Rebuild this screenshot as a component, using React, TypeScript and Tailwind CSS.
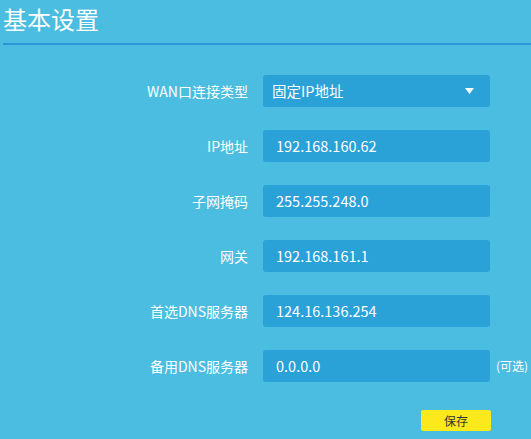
import React from "react";

const rows = [
  { label: "IP地址", value: "192.168.160.62" },
  { label: "子网掩码", value: "255.255.248.0" },
  { label: "网关", value: "192.168.161.1" },
  { label: "首选DNS服务器", value: "124.16.136.254" },
];

export default function App() {
  const font = { fontFamily: '"Noto Sans CJK SC", "Noto Sans", sans-serif' };
  return (
    <div className="w-[531px] h-[439px] bg-[#4bbde0] overflow-hidden text-white" style={font}>
      <div className="pl-[3px] pt-[2px] h-[43px] text-[24px] leading-[34px]">基本设置</div>
      <div className="ml-[3px] h-[2px] bg-[#2b96d8]" />
      <div className="flex flex-col gap-[23px] pt-[30px]">
        <div className="flex items-center h-[32px]">
          <div className="w-[248px] text-right text-[14px]">WAN口连接类型</div>
          <div className="ml-[15px] w-[227px] h-[32px] rounded-[3px] bg-[#2aa2d8] flex items-center justify-between pl-[9px] pr-[16px] text-[14.5px]">
            <span>固定IP地址</span>
            <svg width="9" height="6" viewBox="0 0 9 6"><path d="M0 0h9L4.5 6z" fill="white" /></svg>
          </div>
        </div>
        {rows.map((r) => (
          <div key={r.label} className="flex items-center h-[32px]">
            <div className="w-[248px] text-right text-[14px]">{r.label}</div>
            <div className="ml-[15px] w-[227px] h-[32px] rounded-[3px] bg-[#2aa2d8] flex items-center pl-[13px] text-[14.5px]">
              {r.value}
            </div>
          </div>
        ))}
        <div className="flex items-center h-[32px]">
          <div className="w-[248px] text-right text-[14px]">备用DNS服务器</div>
          <div className="ml-[15px] w-[227px] h-[32px] rounded-[3px] bg-[#2aa2d8] flex items-center pl-[13px] text-[14.5px]">
            0.0.0.0
          </div>
          <div className="ml-[6px] text-[12px]">(可选)</div>
        </div>
      </div>
      <div className="flex pl-[421px] pt-[28px]">
        <button className="w-[70px] h-[21px] rounded-[2px] bg-[#fbe91c] text-[#333] text-[12px] leading-[21px]" style={font}>
          保存
        </button>
      </div>
    </div>
  );
}
